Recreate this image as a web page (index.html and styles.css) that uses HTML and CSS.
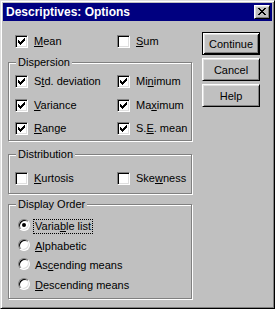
FILE: index.html
```html
<!DOCTYPE html>
<html lang="en">
<head>
  <meta charset="UTF-8">
  <meta name="viewport" content="width=device-width, initial-scale=1.0">
  <title>Descriptives: Options</title>
  <link rel="stylesheet" href="styles.css">
</head>
<body>

  <div class="window">
    <div class="titlebar">
      <span class="title">Descriptives: Options</span>
      <button class="close" aria-label="Close">
        <svg width="8" height="7" viewBox="0 0 8 7"><path d="M0 0h2v1H0zM6 0h2v1H6zM1 1h2v1H1zM5 1h2v1H5zM2 2h4v1H2zM3 3h2v1H3zM2 4h4v1H2zM1 5h2v1H1zM5 5h2v1H5zM0 6h2v1H0zM6 6h2v1H6z" fill="#000"/></svg>
      </button>
    </div>

    <div class="content">
      <div class="options">
        <div class="row top-row">
          <label class="item"><span class="box"><svg class="tick" width="7" height="7" viewBox="0 0 7 7"><path d="M0 2h1v3H0zM1 3h1v3H1zM2 4h1v3H2zM3 3h1v3H3zM4 2h1v3H4zM5 1h1v3H5zM6 0h1v3H6z"/></svg></span><span class="text"><u>M</u>ean</span></label>
          <label class="item"><span class="box"></span><span class="text"><u>S</u>um</span></label>
        </div>

        <div class="group dispersion">
          <span class="group-title">Dispersion</span>
          <div class="row">
            <label class="item"><span class="box"><svg class="tick" width="7" height="7" viewBox="0 0 7 7"><path d="M0 2h1v3H0zM1 3h1v3H1zM2 4h1v3H2zM3 3h1v3H3zM4 2h1v3H4zM5 1h1v3H5zM6 0h1v3H6z"/></svg></span><span class="text">S<u>t</u>d. deviation</span></label>
            <label class="item"><span class="box"><svg class="tick" width="7" height="7" viewBox="0 0 7 7"><path d="M0 2h1v3H0zM1 3h1v3H1zM2 4h1v3H2zM3 3h1v3H3zM4 2h1v3H4zM5 1h1v3H5zM6 0h1v3H6z"/></svg></span><span class="text">Mi<u>n</u>imum</span></label>
            <label class="item"><span class="box"><svg class="tick" width="7" height="7" viewBox="0 0 7 7"><path d="M0 2h1v3H0zM1 3h1v3H1zM2 4h1v3H2zM3 3h1v3H3zM4 2h1v3H4zM5 1h1v3H5zM6 0h1v3H6z"/></svg></span><span class="text"><u>V</u>ariance</span></label>
            <label class="item"><span class="box"><svg class="tick" width="7" height="7" viewBox="0 0 7 7"><path d="M0 2h1v3H0zM1 3h1v3H1zM2 4h1v3H2zM3 3h1v3H3zM4 2h1v3H4zM5 1h1v3H5zM6 0h1v3H6z"/></svg></span><span class="text">Ma<u>x</u>imum</span></label>
            <label class="item"><span class="box"><svg class="tick" width="7" height="7" viewBox="0 0 7 7"><path d="M0 2h1v3H0zM1 3h1v3H1zM2 4h1v3H2zM3 3h1v3H3zM4 2h1v3H4zM5 1h1v3H5zM6 0h1v3H6z"/></svg></span><span class="text"><u>R</u>ange</span></label>
            <label class="item"><span class="box"><svg class="tick" width="7" height="7" viewBox="0 0 7 7"><path d="M0 2h1v3H0zM1 3h1v3H1zM2 4h1v3H2zM3 3h1v3H3zM4 2h1v3H4zM5 1h1v3H5zM6 0h1v3H6z"/></svg></span><span class="text">S.<u>E</u>. mean</span></label>
          </div>
        </div>

        <div class="group distribution">
          <span class="group-title">Distribution</span>
          <div class="row">
            <label class="item"><span class="box"></span><span class="text"><u>K</u>urtosis</span></label>
            <label class="item"><span class="box"></span><span class="text">Ske<u>w</u>ness</span></label>
          </div>
        </div>

        <div class="group order">
          <span class="group-title">Display Order</span>
          <div class="radios">
            <label class="item radio-item"><span class="radio on"></span><span class="text focus">Varia<u>b</u>le list</span></label>
            <label class="item radio-item"><span class="radio"></span><span class="text"><u>A</u>lphabetic</span></label>
            <label class="item radio-item"><span class="radio"></span><span class="text">As<u>c</u>ending means</span></label>
            <label class="item radio-item"><span class="radio"></span><span class="text"><u>D</u>escending means</span></label>
          </div>
        </div>
      </div>

      <div class="buttons">
        <button class="btn default">Continue</button>
        <button class="btn">Cancel</button>
        <button class="btn">Help</button>
      </div>
    </div>
  </div>

</body>
</html>
```

FILE: styles.css
```css
* {
  box-sizing: border-box;
}
body {
  margin: 0;
  background: #c0c0c0;
  font-family: "Liberation Sans", Arial, sans-serif;
  font-size: 11px;
  color: #000;
}
.window {
  width: 275px;
  height: 309px;
  padding: 2px;
  background: #c0c0c0;
  border: 1px solid;
  border-color: #dfdfdf #000 #000 #dfdfdf;
  box-shadow: inset 1px 1px #fff, inset -1px -1px #808080;
}
.titlebar {
  height: 18px;
  display: flex;
  align-items: center;
  justify-content: space-between;
  padding: 0 2px 0 3px;
  background: #000080;
}
.title {
  color: #fff;
  font-weight: bold;
  font-size: 12px;
  line-height: 18px;
}
.close {
  width: 16px;
  height: 14px;
  padding: 0;
  display: flex;
  align-items: center;
  justify-content: center;
  background: #c0c0c0;
  border: 1px solid;
  border-color: #fff #000 #000 #fff;
  box-shadow: inset 1px 1px #dfdfdf, inset -1px -1px #808080;
}
.close svg {
  display: block;
  margin: -1px 0 0 -1px;
}

.content {
  display: flex;
  padding-left: 5px;
}
.options {
  width: 184px;
  padding-top: 13px;
}
.row {
  display: grid;
  grid-template-columns: 102px 1fr;
  row-gap: 8.5px;
}
.top-row {
  padding-left: 7px;
}
.item {
  display: flex;
  align-items: center;
  gap: 4px;
  height: 15px;
  white-space: nowrap;
}
.text {
  border: 1px solid transparent;
  padding: 0 1px;
  line-height: 13px;
}
.text.focus {
  border: 1px dotted #000;
}
.box {
  width: 13px;
  height: 13px;
  flex: none;
  background: #fff;
  border: 1px solid;
  border-color: #808080 #fff #fff #808080;
  box-shadow: inset 1px 1px #000, inset -1px -1px #dfdfdf;
  display: flex;
  align-items: center;
  justify-content: center;
}
.tick {
  display: block;
  fill: #000;
}

.group {
  position: relative;
  border: 1px solid #808080;
  box-shadow: inset 1px 1px #fff, 1px 1px #fff;
  margin-top: 13px;
}
.group-title {
  position: absolute;
  top: -7px;
  left: 7px;
  padding: 0 2px;
  line-height: 13px;
  background: #c0c0c0;
}
.dispersion {
  padding: 11px 0 4px 6px;
}
.distribution {
  padding: 16px 0 7px 6px;
}
.order {
  margin-top: 10px;
  padding: 14px 0 5px 9px;
}
.radios {
  display: flex;
  flex-direction: column;
  gap: 4.67px;
}
.radio-item {
  gap: 3px;
}
.radio {
  width: 12px;
  height: 12px;
  flex: none;
  align-self: flex-start;
  border-radius: 50%;
  background: #fff;
  border: 1px solid;
  border-color: #808080 #fff #fff #808080;
  box-shadow: inset 1px 1px #000, inset -1px -1px #dfdfdf;
  display: flex;
  align-items: center;
  justify-content: center;
}
.radio.on::after {
  content: "";
  width: 4px;
  height: 4px;
  border-radius: 50%;
  background: #000;
}

.buttons {
  display: flex;
  flex-direction: column;
  gap: 3px;
  padding-top: 11px;
  margin-left: 10px;
}
.btn {
  width: 58px;
  height: 23px;
  padding: 0;
  font: inherit;
  color: #000;
  background: #c0c0c0;
  border: 1px solid;
  border-color: #fff #000 #000 #fff;
  box-shadow: inset 1px 1px #dfdfdf, inset -1px -1px #808080;
}
.btn.default {
  border-color: #000;
  box-shadow: inset 1px 1px #fff, inset -1px -1px #000, inset 2px 2px #dfdfdf, inset -2px -2px #808080;
}
```
